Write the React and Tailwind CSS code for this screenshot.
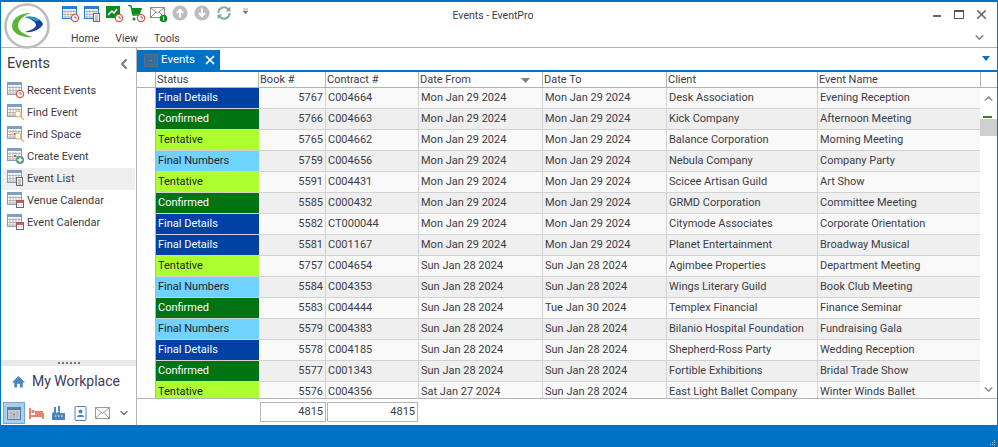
import { X, ChevronLeft, ChevronDown, ChevronUp } from 'lucide-react'

const rows = [
  ['Final Details', '5767', 'C004664', 'Mon Jan 29 2024', 'Mon Jan 29 2024', 'Desk Association', 'Evening Reception'],
  ['Confirmed', '5766', 'C004663', 'Mon Jan 29 2024', 'Mon Jan 29 2024', 'Kick Company', 'Afternoon Meeting'],
  ['Tentative', '5765', 'C004662', 'Mon Jan 29 2024', 'Mon Jan 29 2024', 'Balance Corporation', 'Morning Meeting'],
  ['Final Numbers', '5759', 'C004656', 'Mon Jan 29 2024', 'Mon Jan 29 2024', 'Nebula Company', 'Company Party'],
  ['Tentative', '5591', 'C004431', 'Mon Jan 29 2024', 'Mon Jan 29 2024', 'Scicee Artisan Guild', 'Art Show'],
  ['Confirmed', '5585', 'C000432', 'Mon Jan 29 2024', 'Mon Jan 29 2024', 'GRMD Corporation', 'Committee Meeting'],
  ['Final Details', '5582', 'CT000044', 'Mon Jan 29 2024', 'Mon Jan 29 2024', 'Citymode Associates', 'Corporate Orientation'],
  ['Final Details', '5581', 'C001167', 'Mon Jan 29 2024', 'Mon Jan 29 2024', 'Planet Entertainment', 'Broadway Musical'],
  ['Tentative', '5757', 'C004654', 'Sun Jan 28 2024', 'Sun Jan 28 2024', 'Agimbee Properties', 'Department Meeting'],
  ['Final Numbers', '5584', 'C004353', 'Sun Jan 28 2024', 'Sun Jan 28 2024', 'Wings Literary Guild', 'Book Club Meeting'],
  ['Confirmed', '5583', 'C004444', 'Sun Jan 28 2024', 'Tue Jan 30 2024', 'Templex Financial', 'Finance Seminar'],
  ['Final Numbers', '5579', 'C004383', 'Sun Jan 28 2024', 'Sun Jan 28 2024', 'Bilanio Hospital Foundation', 'Fundraising Gala'],
  ['Final Details', '5578', 'C004185', 'Sun Jan 28 2024', 'Sun Jan 28 2024', 'Shepherd-Ross Party', 'Wedding Reception'],
  ['Confirmed', '5577', 'C001343', 'Sun Jan 28 2024', 'Sun Jan 28 2024', 'Fortible Exhibitions', 'Bridal Trade Show'],
  ['Tentative', '5576', 'C004356', 'Sat Jan 27 2024', 'Sun Jan 28 2024', 'East Light Ballet Company', 'Winter Winds Ballet'],
]

const statusClass = {
  'Final Details': 'bg-[#0041a3] text-white',
  Confirmed: 'bg-[#007413] text-white',
  Tentative: 'bg-[#adff2f] text-[#222]',
  'Final Numbers': 'bg-[#6fd2ff] text-[#222]',
}

const gridCols = 'grid grid-cols-[19px_103px_67px_93px_124px_124px_151px_163px]'

// small calendar sheet used by most of the toolbar and sidebar icons
function Sheet({ color = '#7f9fc4', dot }) {
  return (
    <>
      <rect x="0.5" y="1.5" width="14" height="12" fill="#fff" stroke={color} />
      <rect x="0.5" y="1.5" width="14" height="2.5" fill={color} />
      {[3, 6, 9, 12].map((x) => (
        <line key={x} x1={x} y1="5" x2={x} y2="13" stroke="#b5b5b5" />
      ))}
      {[6.5, 9.5, 12].map((y) => (
        <line key={y} x1="1" y1={y} x2="14" y2={y} stroke="#b5b5b5" />
      ))}
      {dot && <rect x="7" y="8" width="2" height="2" fill="#d9534f" />}
    </>
  )
}

function Clock({ x = 13, y = 13, r = 3.6, color = '#e0554c' }) {
  return (
    <>
      <circle cx={x} cy={y} r={r} fill="#fff" stroke={color} strokeWidth="1.3" />
      <path d={`M${x} ${y - 2}v2h2`} fill="none" stroke="#555" strokeWidth="0.8" />
    </>
  )
}

function Glass() {
  return (
    <>
      <circle cx="11" cy="11" r="3" fill="#fff" stroke="#e3b673" strokeWidth="1.2" />
      <line x1="13" y1="13" x2="17" y2="17" stroke="#e3b673" strokeWidth="1.4" />
    </>
  )
}

function Doc() {
  return (
    <>
      <rect x="9.5" y="8.5" width="6" height="8" fill="#fff" stroke="#666" />
      <path d="M11 11h3M11 13h3M11 15h3" stroke="#666" strokeWidth="0.8" />
    </>
  )
}

function MiniCal() {
  return (
    <>
      <rect x="9.5" y="9.5" width="7" height="7" fill="#fff" stroke="#666" />
      <rect x="9.5" y="9.5" width="7" height="2.5" fill="#e0554c" />
      <path d="M11 14h1M14 14h1" stroke="#666" strokeWidth="0.8" />
    </>
  )
}

function Plus() {
  return (
    <>
      <circle cx="13" cy="13" r="4" fill="#4f9b87" />
      <path d="M13 10.5v5M10.5 13h5" stroke="#fff" strokeWidth="1.3" />
    </>
  )
}

function Ico({ children, size = 20, className = '' }) {
  return (
    <svg width={size} height={size} viewBox="0 0 20 20" className={`shrink-0 ${className}`}>
      {children}
    </svg>
  )
}

function Logo() {
  return (
    <svg width="48" height="48" viewBox="0 0 48 48" className="shrink-0 relative">
      <circle cx="24" cy="24" r="21.5" fill="#fff" stroke="#bdbdbd" strokeWidth="2.6" />
      <path d="M28 11C16 11 9 17 9 24c0 7 9 12 21 11-8-2-15-6-15-11 0-6 6-11 13-13z" fill="#5cb531" />
      <path d="M22 15c8-2 16 2 18 7-2 5-10 9-18 8 6-2 11-4 11-7s-5-6-11-8z" fill="#17439a" />
      <path d="M22 15c6-1 12 0 15 3-2 1-3 1-5 1-2-2-6-3-10-4z" fill="#2a9ac9" />
    </svg>
  )
}

function CircleArrow({ down }) {
  return (
    <Ico size={16} className="mb-[4px]">
      <circle cx="10" cy="10" r="9.5" fill="#bdbdbd" />
      <path
        d={down ? 'M10 4.5v9M6 10l4 4 4-4' : 'M10 15.5v-9M6 10l4-4 4 4'}
        fill="none"
        stroke="#fff"
        strokeWidth="2.4"
      />
    </Ico>
  )
}

function ToolBtn({ children }) {
  return <div className="w-[22px] h-[18px] flex items-center">{children}</div>
}

function Toolbar() {
  return (
    <div className="flex items-center h-[28px] pl-[6px]">
      <ToolBtn><Ico><Sheet color="#2b7cd3" /><Clock /></Ico></ToolBtn>
      <ToolBtn><Ico><Sheet color="#2b7cd3" /><Doc /></Ico></ToolBtn>
      <ToolBtn>
        <Ico>
          <rect x="0" y="1" width="14" height="12" fill="#0b8a1e" />
          <path d="M2 10l4-4 2 2 3-4" fill="none" stroke="#fff" strokeWidth="1.5" />
          <Clock />
        </Ico>
      </ToolBtn>
      <ToolBtn>
        <Ico>
          <path d="M0 0l3 1 2 9h8" fill="none" stroke="#0b8a1e" strokeWidth="1.5" />
          <path d="M4 3h10l-2 6H5z" fill="#0b8a1e" />
          <circle cx="6" cy="14" r="1.5" fill="#0b8a1e" />
          <Clock x={13} y={13} />
        </Ico>
      </ToolBtn>
      <ToolBtn>
        <Ico>
          <rect x="0.5" y="2.5" width="14" height="10" fill="#fff" stroke="#8a8a8a" />
          <path d="M1 3l6.5 5L14 3M1 12l5-5M14 12L9 7" fill="none" stroke="#8a8a8a" />
          <circle cx="13.5" cy="13.5" r="3.8" fill="#0b8a1e" />
          <path d="M13.5 11.5v4" stroke="#fff" strokeWidth="1.2" />
        </Ico>
      </ToolBtn>
      <ToolBtn><CircleArrow /></ToolBtn>
      <ToolBtn><CircleArrow down /></ToolBtn>
      <ToolBtn>
        <Ico size={16} className="mb-[4px]">
          <path d="M3 10a7 7 0 0 1 12-5l2 2M17 10a7 7 0 0 1-12 5l-2-2" fill="none" stroke="#83ad9f" strokeWidth="2.6" />
          <path d="M18 2v6h-6zM2 18v-6h6z" fill="#83ad9f" />
        </Ico>
      </ToolBtn>
      <svg width="7" height="7" viewBox="0 0 7 7" className="ml-[4px] mb-[6px]">
        <path d="M1 1h5M1 3h5l-2.5 3z" fill="#777" stroke="#777" strokeWidth="0.6" />
      </svg>
    </div>
  )
}

function TitleBar() {
  return (
    <div className="relative flex h-[46px] border-b border-[#b4b4b4] shrink-0">
      <div className="w-[55px] pl-[2px]">
        <Logo />
      </div>
      <div className="flex flex-col">
        <Toolbar />
        <div className="flex text-[10.5px] text-[#3c3c46] pl-[15px] mt-[4px] gap-[16px]">
          <span>Home</span>
          <span>View</span>
          <span>Tools</span>
        </div>
      </div>
      <div className="flex-1 flex justify-center pt-[6px] text-[10.5px] text-[#3c3c46] pr-[196px]">Events - EventPro</div>
      <div className="flex flex-col items-end pr-[8px]">
        <div className="flex items-center h-[26px] pb-[2px]">
          <div className="w-[8px] h-[2px] bg-[#666] mt-[3px]" />
          <div className="w-[10px] h-[9px] border border-[#555] border-t-2 ml-[13px]" />
          <X size={15} strokeWidth={2.6} className="text-[#666] ml-[10px]" />
        </div>
        <ChevronDown size={13} strokeWidth={3} className="text-[#8a8a8a] mt-[3px] mr-[3px]" />
      </div>
    </div>
  )
}

const navItems = [
  ['Recent Events', <Ico key="a"><Sheet color="#7f9fc4" /><Clock /></Ico>],
  ['Find Event', <Ico key="b"><Sheet color="#7f9fc4" /><Glass /></Ico>],
  ['Find Space', <Ico key="c"><Sheet color="#7f9fc4" dot /><Glass /></Ico>],
  ['Create Event', <Ico key="d"><Sheet color="#7f9fc4" dot /><Plus /></Ico>],
  ['Event List', <Ico key="e"><Sheet color="#7f9fc4" /><Doc /></Ico>],
  ['Venue Calendar', <Ico key="f"><Sheet color="#7f9fc4" /><MiniCal /></Ico>],
  ['Event Calendar', <Ico key="g"><Sheet color="#7f9fc4" /><MiniCal /></Ico>],
]

function Sidebar() {
  return (
    <div className="w-[136px] shrink-0 border-r border-[#b4b4b4] flex flex-col">
      <div className="flex items-center justify-between h-[32px] pb-[1px] pl-[6px] pr-[4px]">
        <span className="text-[14.5px] text-[#3c3c46]">Events</span>
        <ChevronLeft size={16} strokeWidth={3} className="text-[#777]" />
      </div>
      <div className="flex flex-col">
        {navItems.map(([label, icon]) => (
          <div
            key={label}
            className={`flex items-center h-[22px] pl-[5px] text-[11px] text-[#3c3c46] mx-[1px] ${label === 'Event List' ? 'bg-[#efefef]' : ''}`}
          >
            {icon}
            <span className="pt-[1px]">{label}</span>
          </div>
        ))}
      </div>
      <div className="mt-auto h-[6px] bg-[#e8e8e8] flex items-center justify-center gap-[2px]">
        {[0, 1, 2, 3, 4, 5].map((i) => (
          <span key={i} className="w-[2px] h-[2px] bg-[#777]" />
        ))}
      </div>
      <div className="flex items-center h-[35px] pb-[4px] pl-[10px] gap-[6px]">
        <svg width="15" height="15" viewBox="0 0 16 16" className="shrink-0">
          <path d="M8 2L1 9h2.5v5.5h3v-4h3v4h3V9H15z" fill="#4a86c0" />
        </svg>
        <span className="text-[14px] text-[#3c3c5a] whitespace-nowrap">My Workplace</span>
      </div>
      <div className="flex items-center h-[24px] pl-[2px]">
        <div className="w-[22px] h-[22px] bg-[#a9cfee] border border-[#6aa9dc] flex items-center justify-center">
          <svg width="14" height="13" viewBox="0 0 14 13">
            <rect x="0.5" y="0.5" width="13" height="12" fill="#c8ced4" stroke="#5b7ea5" />
            <rect x="1" y="1" width="12" height="2" fill="#5b7ea5" />
            <path d="M4 3v9M7 3v9M10 3v9M1 6h12M1 9h12" stroke="#9aa5b0" strokeWidth="0.6" />
            <rect x="6" y="7" width="2" height="1" fill="#d9534f" />
          </svg>
        </div>
        <svg width="15" height="12" viewBox="0 0 15 12" className="ml-[4px]">
          <path d="M1 1v11M14 6v6M1 9h13" stroke="#e8836c" strokeWidth="2" fill="none" />
          <rect x="6" y="4" width="8" height="4" fill="#e8836c" />
          <rect x="2.5" y="3" width="3" height="3" fill="#e8836c" />
        </svg>
        <svg width="13" height="14" viewBox="0 0 13 14" className="ml-[8px]">
          <path d="M0 14V7l4-2v2l4-2v2h5v7z" fill="#4a86c0" />
          <rect x="2" y="1" width="2" height="5" fill="#4a86c0" />
          <rect x="6" y="0" width="2" height="5" fill="#4a86c0" />
          <path d="M3 10h1.5M6 10h1.5M9 10h1.5" stroke="#fff" />
        </svg>
        <svg width="13" height="15" viewBox="0 0 13 15" className="ml-[9px]">
          <rect x="1" y="0.5" width="11" height="14" rx="1" fill="#fff" stroke="#4a86c0" />
          <circle cx="6.5" cy="5.5" r="2" fill="#4a86c0" />
          <path d="M3 11c0-3 7-3 7 0z" fill="#4a86c0" />
        </svg>
        <svg width="15" height="12" viewBox="0 0 15 12" className="ml-[8px]">
          <rect x="0.5" y="0.5" width="14" height="11" fill="#fff" stroke="#999" />
          <path d="M1 1l6.5 5.5L14 1M1 11l5-5.5M14 11L9 5.5" fill="none" stroke="#999" />
        </svg>
        <ChevronDown size={12} strokeWidth={3} className="text-[#777] ml-[8px]" />
      </div>
    </div>
  )
}

function HeadCell({ children, last }) {
  return <div className={`flex items-center pl-[1px] pt-[1px] border-r border-[#b4b4b4] truncate ${last ? 'justify-between pr-[12px]' : ''}`}>{children}</div>
}

function Scrollbar() {
  return (
    <div className="relative w-[17px] flex flex-col items-center shrink-0 bg-white">
      <ChevronUp size={13} strokeWidth={3} className="text-[#999] mt-[4px]" />
      <div className="absolute left-[3px] top-[28px] w-[9px] h-[2px] bg-[#3d7f2c]" />
      <div className="w-full h-[17px] bg-[#cfcfcf] mt-[14px]" />
      <ChevronDown size={13} strokeWidth={3} className="text-[#999] mt-auto mb-[2px]" />
    </div>
  )
}

function Grid() {
  return (
    <div className="flex-1 flex flex-col min-h-0 min-w-0">
      <div className={`${gridCols} h-[16px] border-b border-[#b4b4b4] text-[11px] text-[#3c3c46] shrink-0`}>
        <HeadCell />
        <HeadCell>Status</HeadCell>
        <HeadCell>Book #</HeadCell>
        <HeadCell>Contract #</HeadCell>
        <HeadCell last>
          Date From
          <svg width="9" height="5" viewBox="0 0 9 5"><path d="M0 0h9L4.5 5z" fill="#7d7d7d" /></svg>
        </HeadCell>
        <HeadCell>Date To</HeadCell>
        <HeadCell>Client</HeadCell>
        <HeadCell>Event Name</HeadCell>
      </div>
      <div className="flex flex-1 min-h-0">
        <div className="overflow-hidden flex-1">
          {rows.map((r, i) => (
            <div key={i} className={`${gridCols} h-[21px] text-[11px] text-[#3c3c46] ${i % 2 ? 'bg-[#efefef]' : 'bg-[#f9f9f9]'}`}>
              <div className="border-r border-[#b4b4b4] bg-white" />
              <div className={`flex items-center pl-[2px] pt-[1px] border-b border-[#d2d2d2] ${statusClass[r[0]]}`}>{r[0]}</div>
              <div className="flex items-center justify-end pr-[2px] pt-[1px] border-r border-b border-[#d2d2d2]">{r[1]}</div>
              {r.slice(2).map((c, j) => (
                <div key={j} className="flex items-center pl-[2px] pt-[1px] border-r border-b border-[#d2d2d2] whitespace-nowrap overflow-hidden">{c}</div>
              ))}
            </div>
          ))}
        </div>
        <Scrollbar />
      </div>
    </div>
  )
}

export default function App() {
  return (
    <div className="w-[998px] h-[447px] overflow-hidden flex flex-col border-t-2 border-x border-[#0072c6] bg-white font-['Roboto',sans-serif]">
      <TitleBar />
      <div className="flex flex-1 min-h-0">
        <Sidebar />
        <div className="flex-1 flex flex-col min-w-0">
          <div className="relative flex h-[24px] border-b-[2px] border-[#0072c6] shrink-0 pt-[2px]">
            <div className="w-[83px] bg-[#0072c6] text-white text-[11.5px] flex items-center pl-[7px] gap-[3px]">
              <svg width="14" height="13" viewBox="0 0 14 13">
                <rect x="0.5" y="0.5" width="13" height="12" fill="#2a6fa8" stroke="#5b6f86" />
                <path d="M4 1v11M7 1v11M10.5 1v11M1 4h12M1 7h12M1 10h12" stroke="#4c6f92" strokeWidth="0.6" />
                <rect x="6" y="6" width="2" height="1" fill="#e0554c" />
              </svg>
              <span>Events</span>
              <X size={14} strokeWidth={3} className="ml-[5px]" />
            </div>
            <svg width="8" height="5" viewBox="0 0 8 5" className="absolute right-[7px] top-[8px]">
              <path d="M0 0h8L4 5z" fill="#0072c6" />
            </svg>
          </div>
          <Grid />
          <div className="h-[27px] border-t border-[#b4b4b4] flex items-center pl-[123px] gap-[1px] text-[11px] text-[#3c3c46] shrink-0">
            <div className="w-[66px] h-[20px] border border-[#b4b4b4] flex items-center justify-end pr-[2px]">4815</div>
            <div className="w-[91px] h-[20px] border border-[#b4b4b4] flex items-center justify-end pr-[2px]">4815</div>
          </div>
        </div>
      </div>
      <div className="relative h-[22px] bg-[#0072c6] shrink-0">
        <div className="absolute right-[2px] bottom-[2px] grid grid-cols-3 gap-[1px]">
          {[0, 1, 2, 3, 4, 5, 6, 7, 8].map((i) => (
            <span key={i} className={`w-[1px] h-[1px] ${[0, 1, 3].includes(i) ? '' : 'bg-[#a8cfea]'}`} />
          ))}
        </div>
      </div>
    </div>
  )
}
